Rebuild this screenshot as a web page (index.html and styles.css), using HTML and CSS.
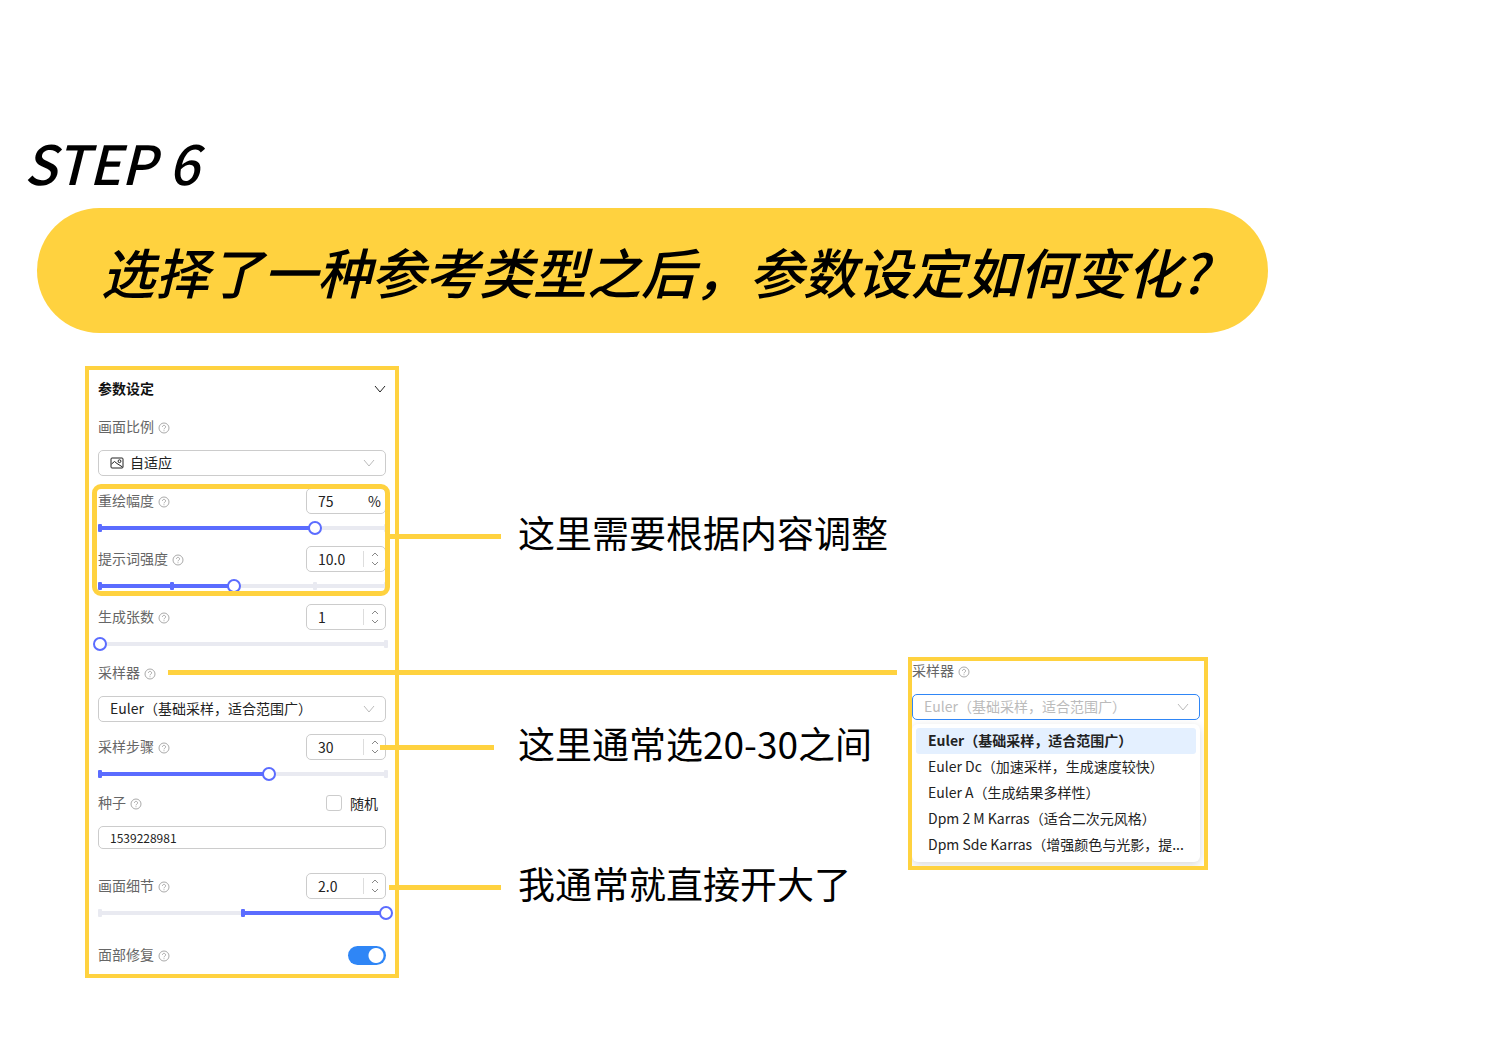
FILE: index.html
```html
<!DOCTYPE html>
<html lang="zh-CN">
<head>
    <meta charset="UTF-8">
    <meta name="viewport" content="width=device-width, initial-scale=1">
    <title>STEP 6 参数设定</title>
    <link rel="stylesheet" href="styles.css">
</head>
<body>

    <!-- Shared icons -->
    <svg class="sprite" aria-hidden="true">
        <symbol id="help" viewBox="0 0 12 12">
            <circle cx="6" cy="6" r="5"/>
            <path d="M4.4 4.9a1.6 1.5 0 1 1 2.5 1.2Q6 6.6 6 7.3M6 8.3v.9"/>
        </symbol>
        <symbol id="down" viewBox="0 0 12 12">
            <path d="M1 3l5 6 5-6"/>
        </symbol>
        <symbol id="step-up" viewBox="0 0 8 6">
            <path d="M1 5l3-3 3 3"/>
        </symbol>
        <symbol id="step-down" viewBox="0 0 8 6">
            <path d="M1 1l3 3 3-3"/>
        </symbol>
        <symbol id="picture" viewBox="0 0 14 12">
            <rect x="1" y="1" width="12" height="10" rx="1"/>
            <path d="M1.5 7l3-2.5 2.5 2L12.5 10"/>
            <circle cx="9.5" cy="4.2" r="1.4"/>
        </symbol>
    </svg>

    <header>
        <h1>STEP 6</h1>
        <h2 class="banner">选择了一种参考类型之后，参数设定如何变化?</h2>
    </header>

    <main class="board">
        <section class="panel">
            <div class="panel-title">
                <h3>参数设定</h3>
                <button class="fold" aria-label="收起"><svg class="icon"><use href="#down"/></svg></button>
            </div>

            <div class="label-row">
                <label for="ratio">画面比例</label><svg class="help"><use href="#help"/></svg>
            </div>
            <div class="select-box with-picture">
                <svg class="picture"><use href="#picture"/></svg>
                <select id="ratio"><option>自适应</option></select>
                <svg class="arrow"><use href="#down"/></svg>
            </div>

            <div class="highlight">
                <div class="field">
                    <div class="field-head">
                        <label for="redraw">重绘幅度</label><svg class="help"><use href="#help"/></svg>
                        <div class="number"><input type="text" id="redraw" value="75"><span class="unit">%</span></div>
                    </div>
                    <div class="slider">
                        <div class="fill" style="width:75%"></div>
                        <i class="mark on" style="left:0%"></i>
                        <i class="mark" style="left:100%"></i>
                        <input type="range" value="75" aria-label="重绘幅度">
                    </div>
                </div>
                <div class="field">
                    <div class="field-head">
                        <label for="prompt">提示词强度</label><svg class="help"><use href="#help"/></svg>
                        <div class="number">
                            <input type="text" id="prompt" value="10.0">
                            <div class="steps">
                                <button aria-label="增加"><svg><use href="#step-up"/></svg></button>
                                <button aria-label="减少"><svg><use href="#step-down"/></svg></button>
                            </div>
                        </div>
                    </div>
                    <div class="slider">
                        <div class="fill" style="width:47%"></div>
                        <i class="mark on" style="left:0%"></i>
                        <i class="mark on" style="left:25%"></i>
                        <i class="mark" style="left:75%"></i>
                        <i class="mark" style="left:100%"></i>
                        <input type="range" value="47" aria-label="提示词强度">
                    </div>
                </div>
            </div>

            <div class="field">
                <div class="field-head">
                    <label for="count">生成张数</label><svg class="help"><use href="#help"/></svg>
                    <div class="number">
                        <input type="text" id="count" value="1">
                        <div class="steps">
                            <button aria-label="增加"><svg><use href="#step-up"/></svg></button>
                            <button aria-label="减少"><svg><use href="#step-down"/></svg></button>
                        </div>
                    </div>
                </div>
                <div class="slider">
                    <i class="mark" style="left:100%"></i>
                    <input type="range" value="0" aria-label="生成张数">
                </div>
            </div>

            <div class="label-row">
                <label for="sampler">采样器</label><svg class="help"><use href="#help"/></svg>
            </div>
            <div class="select-box">
                <select id="sampler"><option>Euler（基础采样，适合范围广）</option></select>
                <svg class="arrow"><use href="#down"/></svg>
            </div>

            <div class="field">
                <div class="field-head">
                    <label for="sample-steps">采样步骤</label><svg class="help"><use href="#help"/></svg>
                    <div class="number">
                        <input type="text" id="sample-steps" value="30">
                        <div class="steps">
                            <button aria-label="增加"><svg><use href="#step-up"/></svg></button>
                            <button aria-label="减少"><svg><use href="#step-down"/></svg></button>
                        </div>
                    </div>
                </div>
                <div class="slider">
                    <div class="fill" style="width:59%"></div>
                    <i class="mark on" style="left:0%"></i>
                    <i class="mark" style="left:100%"></i>
                    <input type="range" value="59" aria-label="采样步骤">
                </div>
            </div>

            <div class="label-row">
                <label for="seed">种子</label><svg class="help"><use href="#help"/></svg>
                <label class="random"><input type="checkbox">随机</label>
            </div>
            <input type="text" class="seed" id="seed" value="1539228981">

            <div class="field">
                <div class="field-head">
                    <label for="detail">画面细节</label><svg class="help"><use href="#help"/></svg>
                    <div class="number">
                        <input type="text" id="detail" value="2.0">
                        <div class="steps">
                            <button aria-label="增加"><svg><use href="#step-up"/></svg></button>
                            <button aria-label="减少"><svg><use href="#step-down"/></svg></button>
                        </div>
                    </div>
                </div>
                <div class="slider">
                    <div class="fill" style="left:50%;width:50%"></div>
                    <i class="mark" style="left:0%"></i>
                    <i class="mark on" style="left:50%"></i>
                    <input type="range" value="100" aria-label="画面细节">
                </div>
            </div>

            <div class="label-row face">
                <label for="face">面部修复</label><svg class="help"><use href="#help"/></svg>
                <input type="checkbox" class="switch" id="face" checked>
            </div>
        </section>

        <section class="notes">
            <p class="note note-adjust">这里需要根据内容调整</p>
            <div class="long-line"></div>
            <p class="note note-steps">这里通常选20-30之间</p>
            <p class="note note-detail">我通常就直接开大了</p>
        </section>

        <section class="popup">
            <div class="label-row">
                <label for="sampler-open">采样器</label><svg class="help"><use href="#help"/></svg>
            </div>
            <div class="select-box open">
                <select id="sampler-open"><option>Euler（基础采样，适合范围广）</option></select>
                <svg class="arrow"><use href="#down"/></svg>
            </div>
            <ul class="options" role="listbox" aria-label="采样器">
                <li role="option" aria-selected="true" class="selected">Euler（基础采样，适合范围广）</li>
                <li role="option">Euler Dc（加速采样，生成速度较快）</li>
                <li role="option">Euler A（生成结果多样性）</li>
                <li role="option">Dpm 2 M Karras（适合二次元风格）</li>
                <li role="option">Dpm Sde Karras（增强颜色与光影，提...</li>
            </ul>
        </section>
    </main>

</body>
</html>
```
FILE: styles.css
```css
* {
    box-sizing: border-box;
}

body {
    margin: 0;
    background: #fff;
    color: #222;
    font-family: "Noto Sans CJK SC", sans-serif;
    font-size: 14px;
}

h1, h2, h3, p, ul {
    margin: 0;
    padding: 0;
}

input, select, button {
    font-family: inherit;
    font-size: 14px;
    color: #222;
    margin: 0;
}

button {
    padding: 0;
    border: none;
    background: none;
    cursor: pointer;
}

svg {
    display: block;
    fill: none;
    stroke: currentColor;
}

.sprite {
    display: none;
}

/* Heading */
h1 {
    padding: 120px 24px 4px;
    color: #000;
    font-size: 54px;
    font-weight: 500;
    font-style: italic;
    line-height: 84px;
}

.banner {
    width: fit-content;
    margin-left: 37px;
    padding: 0 60px 0 64px;
    border-radius: 63px;
    background: #ffd23f;
    color: #000;
    font-size: 54px;
    font-weight: 500;
    font-style: italic;
    line-height: 125px;
}

.board {
    display: flex;
    align-items: flex-start;
    padding: 33px 0 40px 85px;
}

/* Settings panel */
.panel {
    flex: none;
    width: 314px;
    padding: 0 9px 6px;
    border: 4px solid #ffd23f;
}

.panel-title {
    display: flex;
    align-items: center;
    justify-content: space-between;
    height: 38px;
    margin-bottom: 6px;
}

.panel-title h3 {
    padding-bottom: 2px;
    color: #111;
    font-size: 14px;
    font-weight: 700;
}

.icon, .arrow {
    width: 12px;
    height: 12px;
}

.label-row {
    display: flex;
    align-items: center;
    height: 26px;
    color: #666;
}

.label-row label, .field-head label {
    padding-bottom: 2px;
}

.help {
    flex: none;
    width: 12px;
    height: 12px;
    margin: 2px 0 0 4px;
    color: #aaa;
}

.select-box {
    position: relative;
    margin: 10px 0;
}

.select-box select {
    display: block;
    width: 100%;
    height: 26px;
    padding: 0 30px 2px 11px;
    border: 1px solid #ccc;
    border-radius: 5px;
    background: #fff;
    appearance: none;
}

.select-box.with-picture select {
    padding-left: 31px;
}

.picture {
    position: absolute;
    left: 12px;
    top: 7px;
    width: 14px;
    height: 12px;
}

.arrow {
    position: absolute;
    right: 11px;
    top: 7px;
    color: #bbb;
}

.highlight {
    position: relative;
}

.highlight::after {
    content: "";
    position: absolute;
    inset: -2px -4px 6px -6px;
    border: 5px solid #ffd23f;
    border-radius: 9px;
    pointer-events: none;
}

.field {
    padding: 2px 0 6px;
}

.field-head {
    display: flex;
    align-items: center;
    height: 26px;
    color: #666;
}

.number {
    display: flex;
    align-items: center;
    width: 80px;
    height: 26px;
    margin-left: auto;
    border: 1px solid #ccc;
    border-radius: 5px;
    background: #fff;
    color: #222;
}

.number input {
    flex: 1;
    min-width: 0;
    padding: 0 0 0 11px;
    border: none;
    background: none;
}

.unit {
    padding-right: 4px;
}

.steps {
    display: flex;
    flex-direction: column;
    justify-content: space-between;
    align-items: center;
    width: 22px;
    height: 16px;
    border-left: 1px solid #ddd;
}

.steps svg {
    width: 8px;
    height: 6px;
    color: #888;
}

/* Slider: rail, filled part, marks, thumb */
.slider {
    position: relative;
    height: 20px;
    margin: 4px 0 0 2px;
    background: linear-gradient(#e9eaf1, #e9eaf1) center / 100% 4px no-repeat;
}

.fill {
    position: absolute;
    left: 0;
    top: 8px;
    height: 4px;
    background: #5b6cff;
}

.mark {
    position: absolute;
    top: 6px;
    width: 4px;
    height: 8px;
    margin-left: -2px;
    border-radius: 1px;
    background: #e9eaf1;
}

.mark.on {
    background: #5b6cff;
}

.slider input {
    position: absolute;
    left: -7px;
    top: 0;
    width: calc(100% + 14px);
    height: 20px;
    background: none;
    appearance: none;
}

.slider input::-webkit-slider-thumb {
    appearance: none;
    width: 14px;
    height: 14px;
    border: 2px solid #5b6cff;
    border-radius: 50%;
    background: #fff;
}

.label-row .random {
    display: flex;
    align-items: center;
    gap: 8px;
    margin-left: auto;
    padding: 0 8px 0 0;
    color: #222;
}

.random input {
    width: 16px;
    height: 16px;
    border: 1px solid #ccc;
    border-radius: 3px;
    appearance: none;
}

.seed {
    display: block;
    width: 100%;
    height: 23px;
    margin: 10px 0 22px;
    padding: 0 11px 1px;
    border: 1px solid #ccc;
    border-radius: 5px;
    font-size: 12px;
}

.face {
    margin-top: 13px;
}

.switch {
    width: 38px;
    height: 19px;
    margin-left: auto;
    border-radius: 10px;
    background: radial-gradient(circle at 28px 50%, #fff 7px, #2f86f6 8px);
    appearance: none;
}

/* Notes with their connector lines */
.notes {
    position: relative;
    flex: none;
    width: 509px;
}

.note {
    display: flex;
    align-items: center;
    gap: 17px;
    height: 50px;
    margin-left: -10px;
    color: #000;
    font-size: 37px;
    font-weight: 400;
    line-height: 50px;
    white-space: nowrap;
}

.note::before {
    content: "";
    flex: none;
    width: 112px;
    height: 5px;
    margin-top: 8px;
    background: #ffd23f;
}

.note-adjust {
    margin-top: 141px;
}

.long-line {
    height: 5px;
    margin: 113px 11px 43px -231px;
    background: #ffd23f;
}

.note-steps {
    gap: 24px;
    margin-left: -19px;
}

.note-steps::before {
    width: 114px;
}

.note-detail {
    margin-top: 90px;
}

/* Opened sampler list */
.popup {
    flex: none;
    width: 300px;
    margin-top: 291px;
    padding: 0 4px 4px 0;
    border: 4px solid #ffd23f;
    overflow: hidden;
}

.popup .label-row {
    height: 20px;
}

.popup .select-box {
    margin: 13px 0 4px;
}

.open select {
    border-color: #2f86f6;
    color: #bbb;
}

.options {
    padding: 4px;
    border-radius: 6px;
    background: #fff;
    box-shadow: 0 3px 10px rgba(0, 0, 0, 0.15);
    list-style: none;
}

.options li {
    height: 26px;
    padding: 0 4px 0 12px;
    border-radius: 3px;
    line-height: 24px;
    white-space: nowrap;
}

.options .selected {
    background: #e4f0ff;
    font-weight: 700;
}
```
